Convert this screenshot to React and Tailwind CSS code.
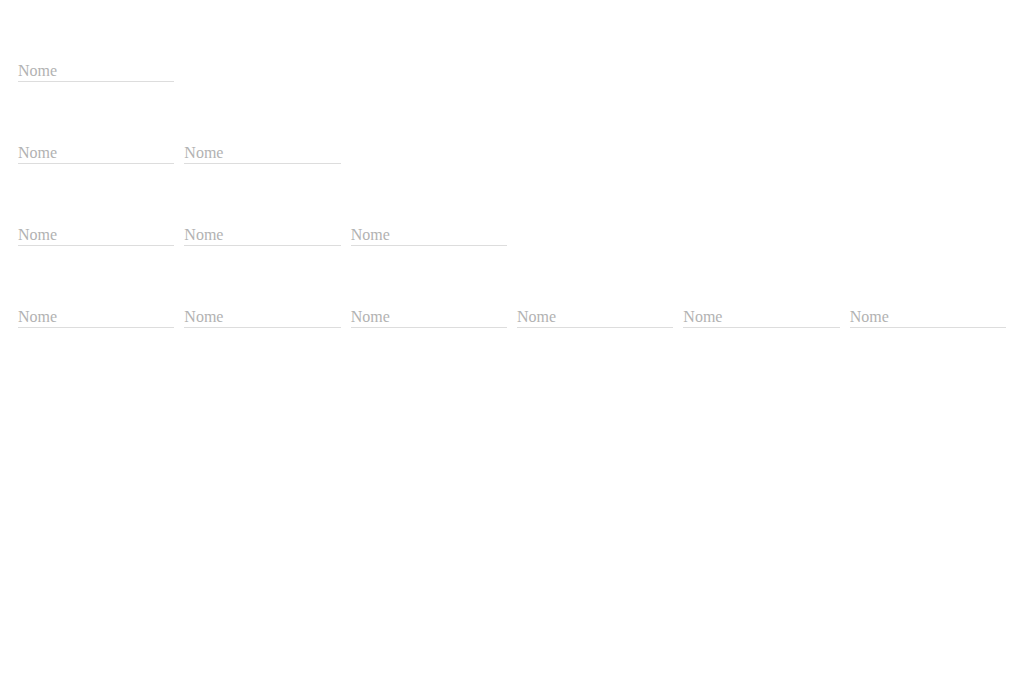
const rows = [1, 2, 3, 6];

function Field({ id }) {
  return (
    <div className="relative border-b border-[#dddddd]">
      <input
        id={id}
        type="text"
        placeholder=" "
        className="peer block h-5 w-full bg-transparent text-base leading-5 text-[#212121] outline-none"
      />
      <label
        htmlFor={id}
        className="pointer-events-none absolute inset-x-0 -top-5 text-xs leading-5 text-[#b2b2b2] peer-placeholder-shown:top-0 peer-placeholder-shown:text-base peer-placeholder-shown:leading-5 peer-focus:-top-5 peer-focus:text-xs"
      >
        Nome
      </label>
    </div>
  );
}

export default function App() {
  return (
    <form className="flex flex-col gap-[61px] bg-white px-[18px] pt-[61px] font-['Liberation_Serif',serif]">
      {rows.map((count, row) => (
        <div key={row} className="grid grid-cols-6 gap-x-[10px]">
          {Array.from({ length: count }, (_, i) => (
            <Field key={i} id={`nome-${row}-${i}`} />
          ))}
        </div>
      ))}
    </form>
  );
}
